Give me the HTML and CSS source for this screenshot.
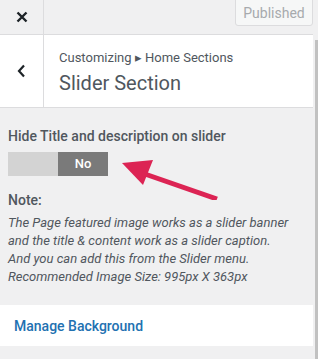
FILE: index.html
```html
<!DOCTYPE html>
<html lang="en">
<head>
    <meta charset="UTF-8">
    <title>Customize - Slider Section</title>
    <link rel="stylesheet" href="styles.css">
</head>
<body>
    <div class="frame">
        <div class="panel">
            <div class="topbar">
                <div class="close-btn">
                    <svg width="12" height="12" viewBox="0 0 12 12"><path d="M1.5 1.5L10.5 10.5M10.5 1.5L1.5 10.5" stroke="#1d2327" stroke-width="2.4"/></svg>
                </div>
                <button class="publish-btn">Published</button>
            </div>

            <div class="section-head">
                <div class="back-btn">
                    <svg width="9" height="14" viewBox="0 0 9 14"><path d="M7 1.5L2 7l5 5.5" fill="none" stroke="#1d2327" stroke-width="2.2"/></svg>
                </div>
                <div class="section-title">
                    <p class="crumb">Customizing &#9656; Home Sections</p>
                    <h2>Slider Section</h2>
                </div>
            </div>

            <div class="controls">
                <p class="control-label">Hide Title and description on slider</p>
                <div class="toggle">
                    <span class="toggle-off"></span>
                    <span class="toggle-on">No</span>
                </div>

                <p class="note-title">Note:</p>
                <p class="note-text">The Page featured image works as a slider banner<br>
                    and the title &amp; content work as a slider caption.<br>
                    And you can add this from the Slider menu.<br>
                    Recommended Image Size: 995px X 363px</p>
            </div>

            <div class="manage-box">
                <a href="#" class="manage-link">Manage Background</a>
            </div>

            <svg class="pointer" width="110" height="50" viewBox="0 0 110 50">
                <path d="M2 13L33 10L23 35Z" fill="#dc2454"/>
                <path d="M22 23L97 49" stroke="#dc2454" stroke-width="5"/>
            </svg>
        </div>
        <div class="scroll-track"><div class="scroll-thumb"></div></div>
    </div>
</body>
</html>
```

FILE: styles.css
```css
body {
    margin: 0;
    background: #f0f0f1;
    font-family: Roboto, "Liberation Sans", sans-serif;
    color: #50575e;
}
.frame {
    display: flex;
    width: 318px;
    height: 359px;
    overflow: hidden;
}
.panel {
    position: relative;
    width: 313px;
}
.topbar {
    display: flex;
    height: 34px;
    border-bottom: 1px solid #dcdcde;
}
.close-btn {
    width: 43px;
    border-right: 1px solid #dcdcde;
    display: flex;
    align-items: center;
    justify-content: center;
}
.publish-btn {
    margin-left: auto;
    margin-top: -4px;
    width: 78px;
    height: 30px;
    padding-top: 4px;
    background: #f6f7f7;
    border: 1px solid #dcdcde;
    border-radius: 3px;
    color: #a7aaad;
    font-family: inherit;
    font-size: 14px;
}
.section-head {
    display: flex;
    height: 72px;
    background: #fff;
    border-bottom: 1px solid #dcdcde;
}
.back-btn {
    width: 43px;
    border-right: 1px solid #dcdcde;
    display: flex;
    align-items: center;
    justify-content: center;
}
.section-title {
    padding: 15px 0 0 15px;
}
.crumb {
    margin: 0;
    font-size: 13px;
    line-height: 16px;
}
.section-title h2 {
    margin: 5px 0 0;
    font-size: 20px;
    font-weight: 400;
    line-height: 24px;
}
.controls {
    padding: 19px 8px 0;
}
.control-label {
    margin: 0;
    font-size: 14px;
    font-weight: 500;
    line-height: 18px;
}
.toggle {
    display: flex;
    width: 100px;
    height: 24px;
    margin-top: 7px;
}
.toggle-off {
    flex: 1;
    background: #d3d3d3;
}
.toggle-on {
    flex: 1;
    background: #7a7a7a;
    color: #fff;
    font-size: 13px;
    font-weight: 500;
    line-height: 24px;
    text-align: center;
}
.note-title {
    margin: 15px 0 0;
    font-size: 14px;
    font-weight: 500;
    line-height: 18px;
}
.note-text {
    margin: 5px 0 0;
    font-size: 13px;
    font-style: italic;
    line-height: 18px;
    white-space: nowrap;
}
.manage-box {
    margin-top: 19px;
    height: 41px;
    background: #fff;
    display: flex;
    align-items: center;
    padding-left: 14px;
}
.manage-link {
    color: #2271b1;
    font-size: 14px;
    font-weight: 500;
    text-decoration: none;
}
.pointer {
    position: absolute;
    left: 120px;
    top: 150px;
}
.scroll-track {
    width: 5px;
    padding-top: 40px;
}
.scroll-thumb {
    margin-left: 2px;
    width: 3px;
    height: 100%;
    background: #c1c1c1;
}
```
